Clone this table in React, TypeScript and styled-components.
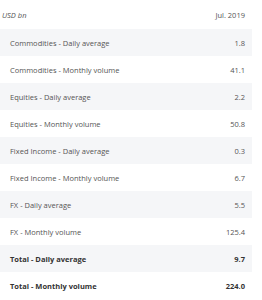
import React from 'react';
import styled, {createGlobalStyle} from "styled-components";

const GlobalStyle = createGlobalStyle`
  body {
    margin: 0;
    background: #ffffff;
    font-family: "Open Sans", sans-serif;
  }
`

type Row = { label: string; value: string; total?: boolean };

const rows: Row[] = [
    {label: "Commodities - Daily average", value: "1.8"},
    {label: "Commodities - Monthly volume", value: "41.1"},
    {label: "Equities - Daily average", value: "2.2"},
    {label: "Equities - Monthly volume", value: "50.8"},
    {label: "Fixed Income - Daily average", value: "0.3"},
    {label: "Fixed Income - Monthly volume", value: "6.7"},
    {label: "FX - Daily average", value: "5.5"},
    {label: "FX - Monthly volume", value: "125.4"},
    {label: "Total - Daily average", value: "9.7", total: true},
    {label: "Total - Monthly volume", value: "224.0", total: true},
];

export default function App() {
    return (
        <>
            <GlobalStyle/>
            <Table>
                <HeaderRow>
                    <HeaderUnit>USD bn</HeaderUnit>
                    <HeaderDate>Jul. 2019</HeaderDate>
                </HeaderRow>
                {rows.map((r, i) => (
                    <DataRow key={r.label} $striped={i % 2 === 0}>
                        <Label $bold={!!r.total}>{r.label}</Label>
                        <Value $bold={!!r.total}>{r.value}</Value>
                    </DataRow>
                ))}
            </Table>
        </>
    );
}

const Table = styled.div`
  width: 252px;
  display: flex;
  flex-direction: column;
  color: #555555;
  font-size: 7.5px;
`
const HeaderRow = styled.div`
  height: 29px;
  display: flex;
  justify-content: space-between;
  align-items: center;
  padding: 1px 7px 0 2px;
  box-sizing: border-box;
`
const HeaderUnit = styled.span`
  font-style: italic;
`
const HeaderDate = styled.span`
`
const DataRow = styled.div<{ $striped: boolean }>`
  height: 27px;
  display: flex;
  justify-content: space-between;
  align-items: center;
  padding: 0 7px 0 10px;
  box-sizing: border-box;
  background-color: ${p => p.$striped ? "#f5f6f8" : "transparent"};
`
const Label = styled.span<{ $bold: boolean }>`
  font-weight: ${p => p.$bold ? 700 : 400};
  color: ${p => p.$bold ? "#333333" : "#555555"};
`
const Value = styled.span<{ $bold: boolean }>`
  font-weight: ${p => p.$bold ? 700 : 400};
  color: ${p => p.$bold ? "#333333" : "#555555"};
`
